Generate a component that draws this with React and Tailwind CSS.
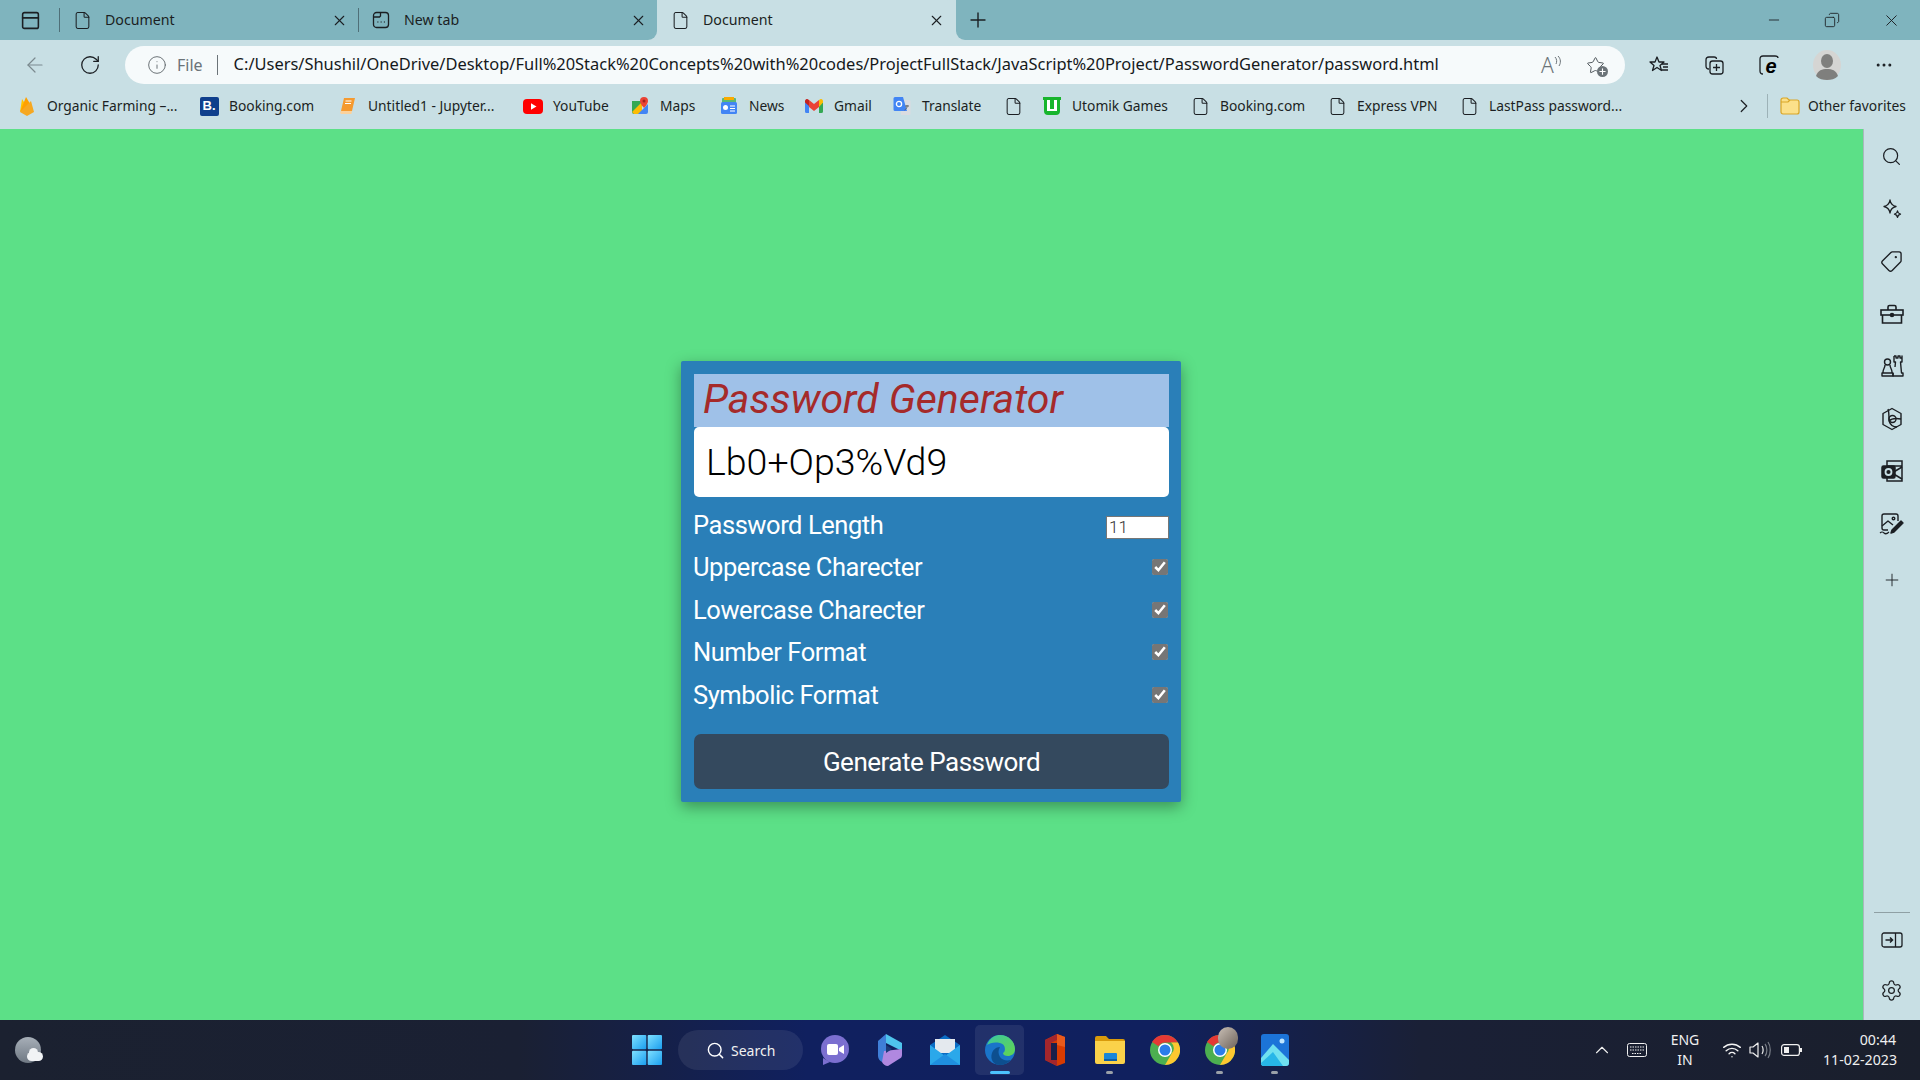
import { ArrowLeft, ChevronRight, ChevronUp, Copy, File, Info, Minus, MoreHorizontal, PanelTop, Plus, RotateCw, Search, Settings, Star, Tag, Wifi, X } from "lucide-react";

const ink = "#1b1f23";

function PageIcon() {
  return <File size={19} strokeWidth={1.3} color={ink} className="shrink-0" />;
}

function Flame() {
  return (
    <svg width="18" height="22" viewBox="0 0 18 22" className="shrink-0">
      <path d="M2 17 4 4l4 6z" fill="#ffc400" />
      <path d="M2 17 8 2l3 5 1 4z" fill="#ffa000" />
      <path d="M2 17 13 6l3 11-7 4z" fill="#f6a821" />
    </svg>
  );
}

function BookingIcon() {
  return (
    <span className="w-[19px] h-[19px] shrink-0 rounded-[2px] bg-[#0f3f8c] text-white text-[13px] font-bold flex items-center justify-center font-['Liberation_Sans',sans-serif]">
      B.
    </span>
  );
}

function BookIcon() {
  return (
    <svg width="18" height="18" viewBox="0 0 18 18" className="shrink-0">
      <path d="M5 1h11l-3 13H2z" fill="#f59a2f" />
      <path d="M2 14h11l-.6 3H2.500A1.600 1.600 0 0 1 2 14z" fill="#fbd29c" />
      <path d="M6.500 4h6M6 6.500h6" stroke="#fff" strokeWidth="1" />
    </svg>
  );
}

function YoutubeIcon() {
  return (
    <svg width="20" height="15" viewBox="0 0 20 15" className="shrink-0">
      <rect width="20" height="15" rx="4" fill="#f00" />
      <path d="M8 4.200v6.600l5.500-3.300z" fill="#fff" />
    </svg>
  );
}

function MapsIcon() {
  return (
    <svg width="18" height="18" viewBox="0 0 18 18" className="shrink-0">
      <path d="M1 4h10v13H3a2 2 0 0 1-2-2z" fill="#34a853" />
      <path d="M1 15 11 5v12H3z" fill="#fbbc04" />
      <path d="M7 17 17 7v8a2 2 0 0 1-2 2z" fill="#4285f4" />
      <path d="M13 0a4 4 0 0 1 4 4c0 3-4 7-4 7s-4-4-4-7a4 4 0 0 1 4-4z" fill="#ea4335" />
      <circle cx="13" cy="4" r="1.500" fill="#a3231a" />
    </svg>
  );
}

function NewsIcon() {
  return (
    <svg width="18" height="18" viewBox="0 0 18 18" className="shrink-0">
      <rect x="2" y="1" width="14" height="6" rx="1" fill="#5bb974" />
      <rect x="4" y="0" width="10" height="3" fill="#f9ab00" />
      <rect x="1" y="5" width="16" height="12" rx="1.500" fill="#4285f4" />
      <rect x="3" y="8" width="5" height="5" rx="2.500" fill="#fff" />
      <path d="M10 9h5M10 11.500h5M10 14h5" stroke="#fff" strokeWidth="1.200" />
    </svg>
  );
}

function GmailIcon() {
  return (
    <svg width="18" height="14" viewBox="0 0 18 14" className="shrink-0">
      <path d="M0 3v9.500A1.500 1.500 0 0 0 1.500 14H4V6z" fill="#4285f4" />
      <path d="M14 6v8h2.500a1.500 1.500 0 0 0 1.500-1.500V3z" fill="#34a853" />
      <path d="M4 7 0 3.500V2a2 2 0 0 1 3.200-1.600L4 1z" fill="#c5221f" />
      <path d="M4 8V1l5 4 5-4v7L9 12z" fill="#ea4335" />
      <path d="M14 8V1l.8-.6A2 2 0 0 1 18 2v1.500z" fill="#fbbc04" />
    </svg>
  );
}

function TranslateIcon() {
  return (
    <svg width="18" height="18" viewBox="0 0 18 18" className="shrink-0">
      <path d="M8 3h8a1.500 1.500 0 0 1 1.500 1.500v12A1.500 1.500 0 0 1 16 18H8z" fill="#dadce0" />
      <path d="M2 0h8l4 14H2a1.500 1.500 0 0 1-1.500-1.500v-11A1.500 1.500 0 0 1 2 0z" fill="#4285f4" />
      <circle cx="6" cy="7" r="2.600" fill="none" stroke="#fff" strokeWidth="1.300" />
      <path d="M12 9h4M14 8v1.500c0 2-1.500 3-2.500 3.500" stroke="#5f6368" strokeWidth="1" fill="none" />
    </svg>
  );
}

function UtomikIcon() {
  return (
    <svg width="20" height="20" viewBox="0 0 20 20" className="shrink-0">
      <path d="M1 4V1h18v3h-1v11a4 4 0 0 1-4 4H6a4 4 0 0 1-4-4V4z" fill="#18b52d" />
      <path d="M5 4h3v9h4V4h3v11H5z" fill="#fff" />
      <rect x="8.500" y="1" width="3" height="12" fill="#18b52d" />
    </svg>
  );
}

const bookmarks = [
  { icon: <Flame />, label: "Organic Farming –...", w: "w-[182px]" },
  { icon: <BookingIcon />, label: "Booking.com", w: "w-[139px]" },
  { icon: <BookIcon />, label: "Untitled1 - Jupyter...", w: "w-[185px]" },
  { icon: <YoutubeIcon />, label: "YouTube", w: "w-[107px]" },
  { icon: <MapsIcon />, label: "Maps", w: "w-[89px]" },
  { icon: <NewsIcon />, label: "News", w: "w-[85px]" },
  { icon: <GmailIcon />, label: "Gmail", w: "w-[88px]" },
  { icon: <TranslateIcon />, label: "Translate", w: "w-[111px]" },
  { icon: <PageIcon />, label: "", w: "w-[39px]" },
  { icon: <UtomikIcon />, label: "Utomik Games", w: "w-[148px]" },
  { icon: <PageIcon />, label: "Booking.com", w: "w-[137px]" },
  { icon: <PageIcon />, label: "Express VPN", w: "w-[132px]" },
  { icon: <PageIcon />, label: "LastPass password...", w: "w-[270px]" },
];

function NewTabIcon() {
  return (
    <svg width="18" height="18" viewBox="0 0 18 18" fill="none" stroke={ink} strokeWidth="1.300" className="shrink-0">
      <rect x="1.500" y="1.500" width="15" height="15" rx="3" />
      <path d="M1.500 6h6l1-1V1.500" />
      <path d="M5.500 11h.8M8.700 11h.8M11.900 11h.8" strokeWidth="1.600" />
    </svg>
  );
}

function Tab({ icon, title, className }) {
  return (
    <div className={`h-10 flex items-center shrink-0 ${className}`}>
      {icon}
      <span className="flex-1 -mt-[1px] text-[14.200px] text-[#1b1f23]">{title}</span>
      <X size={17} strokeWidth={1.5} color={ink} />
    </div>
  );
}

function TabBar() {
  return (
    <div className="h-10 flex bg-[#c8dfe4] shrink-0">
      <div className="w-[657px] flex items-center bg-[#7fb4be] rounded-br-[9px]">
        <div className="w-[59px] h-10 flex items-center justify-center pl-[1px] shrink-0">
          <PanelTop size={21} strokeWidth={1.8} color={ink} />
        </div>
        <div className="w-px h-[24px] bg-[#4f6f78] shrink-0" />
        <Tab icon={<PageIcon />} title="Document" className="w-[298px] pl-[13px] pr-[10px] gap-[13px]" />
        <div className="w-px h-[24px] bg-[#4f6f78] shrink-0" />
        <Tab icon={<NewTabIcon />} title="New tab" className="w-[298px] pl-[13px] pr-[10px] gap-[14px]" />
      </div>
      <Tab icon={<PageIcon />} title="Document" className="w-[299px] pl-[14px] pr-[11px] gap-[13px] bg-[#c8dfe4] rounded-t-[9px]" />
      <div className="flex-1 flex items-center bg-[#7fb4be] rounded-bl-[9px]">
        <div className="w-[44px] flex justify-center">
          <Plus size={24} strokeWidth={1.4} color={ink} />
        </div>
        <div className="ml-auto flex items-center pr-[19px] gap-[42px]">
          <Minus size={16} strokeWidth={1.3} color={ink} />
          <Copy size={16} strokeWidth={1.3} color={ink} className="-scale-x-100" />
          <X size={19} strokeWidth={1.2} color={ink} />
        </div>
      </div>
    </div>
  );
}

function ReadAloud() {
  return (
    <span className="w-[24px] flex items-center text-[#6b7378]">
      <span className="text-[21px] font-light leading-none">A</span>
      <svg width="9" height="14" viewBox="0 0 9 14" fill="none" stroke="#6b7378" strokeWidth="1" className="-mt-[6px]">
        <path d="M1 2c2 2 2 5 1 7M4 1c3 3 3 7 1 10" />
      </svg>
    </span>
  );
}

function FavAdd() {
  return (
    <span className="relative w-[22px] h-[22px] flex items-center justify-center">
      <Star size={19} strokeWidth={1.2} color="#4b5257" />
      <span className="absolute right-[-2px] bottom-[-1px] w-[11px] h-[11px] rounded-full bg-[#6b7378] text-white flex items-center justify-center">
        <Plus size={9} strokeWidth={3} />
      </span>
    </span>
  );
}

function FavList() {
  return (
    <svg width="22" height="22" viewBox="0 0 22 22" fill="none" stroke={ink} strokeWidth="1.300">
      <path d="M9 3l2 5h5l-4 3.500 1.500 5L9 13.500 4.500 16.500 6 11.500 2 8h5z" strokeLinejoin="round" />
      <path d="M14 10h6M15 13h5M14 16h6" />
    </svg>
  );
}

function Collections() {
  return (
    <svg width="22" height="22" viewBox="0 0 22 22" fill="none" stroke={ink} strokeWidth="1.300">
      <path d="M6 15c-2 0-3-1-3-3V6c0-2 1-3 3-3h5c1.500 0 2.500 1 2.500 2" />
      <rect x="7" y="7" width="13" height="13" rx="2.500" />
      <path d="M13.500 10v7M10 13.500h7" />
    </svg>
  );
}

function EdgeE() {
  return (
    <span className="relative w-[22px] h-[22px] flex items-center justify-center">
      <svg width="22" height="22" viewBox="0 0 22 22" fill="none" stroke={ink} strokeWidth="1.300" className="absolute inset-0">
        <path d="M5 20c-2 0-3-1-3-3V5c0-2 1-3 3-3h12c2 0 3 1 3 2" />
      </svg>
      <span className="relative text-[20px] font-bold italic leading-none text-black font-['Liberation_Sans',sans-serif] mt-[1px] ml-[4px]">e</span>
    </span>
  );
}

function Avatar() {
  return (
    <svg width="28" height="30" viewBox="0 0 28 30">
      <ellipse cx="14" cy="15" rx="14" ry="15" fill="#d5d5d3" />
      <ellipse cx="14" cy="11" rx="6" ry="7" fill="#7f7f7d" />
      <path d="M3 26c2-6 6-7 11-7s9 1 11 7c-3 3-7 4-11 4s-8-1-11-4z" fill="#7f7f7d" />
    </svg>
  );
}

function Toolbar() {
  return (
    <div className="h-[45px] flex items-center shrink-0 bg-[#c8dfe4] pt-[5px]">
      <div className="w-[68px] flex justify-center pl-[1px]">
        <ArrowLeft size={24} strokeWidth={1.2} color="#7b8a8f" />
      </div>
      <div className="w-[44px] flex justify-center">
        <RotateCw size={22} strokeWidth={1.4} color={ink} />
      </div>
      <div className="w-[1500px] ml-[13px] h-[38px] rounded-full bg-[#f6fafb] flex items-center shrink-0">
        <Info size={20} strokeWidth={1.1} color="#5f676b" className="ml-[22px]" />
        <span className="ml-[10px] -mt-[1px] text-[16px] text-[#6b7378]">File</span>
        <span className="ml-[14px] w-px h-[20px] bg-[#6b7378]" />
        <span className="ml-[16px] w-[1288px] -mt-[1px] text-[16.450px] text-[#15191c] whitespace-nowrap">
          C:/Users/Shushil/OneDrive/Desktop/Full%20Stack%20Concepts%20with%20codes/ProjectFullStack/JavaScript%20Project/PasswordGenerator/password.html
        </span>
        <div className="ml-auto flex items-center gap-[19px] pr-[19px]">
          <ReadAloud />
          <FavAdd />
        </div>
      </div>
      <div className="flex-1 flex items-center justify-between pl-[23px] pr-[26px]">
        <FavList />
        <Collections />
        <EdgeE />
        <Avatar />
        <MoreHorizontal size={20} strokeWidth={1.6} color={ink} />
      </div>
    </div>
  );
}

function BookmarksBar() {
  return (
    <div className="h-[44px] flex items-center shrink-0 bg-[#c8dfe4] pl-[18px] pb-[2px]">
      {bookmarks.map((b, i) => (
        <div key={i} className={`${b.w} shrink-0 flex items-center gap-[11px]`}>
          <span className="w-[18px] flex justify-center">{b.icon}</span>
          {b.label && <span className="text-[13.800px] text-[#1b1f23] whitespace-nowrap">{b.label}</span>}
        </div>
      ))}
      <div className="w-[28px] flex justify-center">
        <ChevronRight size={22} strokeWidth={1.3} color={ink} />
      </div>
      <div className="w-px h-[24px] bg-[#9db2b7] ml-[9px]" />
      <div className="ml-[12px] flex items-center gap-[8px]">
        <svg width="20" height="18" viewBox="0 0 20 18" className="shrink-0">
          <path d="M1 3a2 2 0 0 1 2-2h4l2 2h8a2 2 0 0 1 2 2v10a2 2 0 0 1-2 2H3a2 2 0 0 1-2-2z" fill="#fbe08a" stroke="#d9a526" strokeWidth="1.200" />
          <path d="M1 5h7l2-2" fill="none" stroke="#d9a526" strokeWidth="1.200" />
        </svg>
        <span className="text-[13.800px] text-[#1b1f23] whitespace-nowrap">Other favorites</span>
      </div>
    </div>
  );
}

function OptionRow({ label }) {
  return (
    <div className="h-[42.500px] flex items-center justify-between text-white text-[25.500px] tracking-[-0.450px]">
      <span className="-ml-[1px]">{label}</span>
      <input type="checkbox" defaultChecked className="w-4 h-4 mr-[1px] accent-[#767676]" />
    </div>
  );
}

function PasswordCard() {
  return (
    <div className="w-[500px] pl-[13px] pr-[12px] pt-[13px] pb-[13px] bg-[#2a7fb8] rounded-[2px] shadow-[0_5px_15px_rgba(0,0,0,0.35)] font-['Roboto',sans-serif]">
      <h1 className="h-[53px] pl-[9px] pb-[2px] flex items-center bg-[#9fc1e8] text-[#a52a2a] text-[41px] italic font-normal leading-none">
        Password Generator
      </h1>
      <div className="h-[70px] pl-[12px] pt-[1px] flex items-center bg-white rounded-[5px] text-black text-[37.500px] font-light">
        Lb0+Op3%Vd9
      </div>
      <div className="h-[40px] mt-[9px] flex items-center justify-between text-white text-[25.500px] tracking-[-0.450px]">
        <span className="-mt-[2px] -ml-[1px]">Password Length</span>
        <input
          type="number"
          defaultValue={11}
          readOnly
          className="w-[63px] h-[23px] mt-[3px] px-[2px] bg-white border border-[#767676] text-[17px] font-light tracking-normal text-[#333]"
        />
      </div>
      <OptionRow label="Uppercase Charecter" />
      <OptionRow label="Lowercase Charecter" />
      <OptionRow label="Number Format" />
      <OptionRow label="Symbolic Format" />
      <button className="w-full h-[55px] mt-[18px] pt-[2px] bg-[#34495e] rounded-[7px] text-white text-[26px] font-normal tracking-[-0.500px]">
        Generate Password
      </button>
    </div>
  );
}

function SideSlot({ children }) {
  return <div className="h-[52.500px] flex items-center justify-center shrink-0">{children}</div>;
}

function Sparkle() {
  return (
    <svg width="22" height="22" viewBox="0 0 22 22" fill="none" stroke={ink} strokeWidth="1.300" strokeLinejoin="round">
      <path d="M9 2c.6 4 2 5.500 6 6.500-4 1-5.400 2.500-6 6.500-.6-4-2-5.500-6-6.500 4-1 5.400-2.500 6-6.500z" />
      <path d="M16.500 13c.3 2 1 2.700 3 3.200-2 .5-2.700 1.200-3 3.200-.3-2-1-2.700-3-3.200 2-.5 2.700-1.200 3-3.200z" />
    </svg>
  );
}

function Toolbox() {
  return (
    <svg width="24" height="22" viewBox="0 0 24 22" fill="none" stroke={ink} strokeWidth="1.600">
      <path d="M8 7V4a1.500 1.500 0 0 1 1.500-1.500h5A1.500 1.500 0 0 1 16 4v3" />
      <rect x="1" y="7" width="22" height="5" />
      <path d="M2.500 12v8h19v-8" />
      <circle cx="12" cy="12" r="1.500" fill={ink} />
    </svg>
  );
}

function Chess() {
  return (
    <svg width="24" height="24" viewBox="0 0 24 24" fill="none" stroke={ink} strokeWidth="1.400" strokeLinejoin="round">
      <path d="M14 2h2v2h2V2h2v2h2V2v6h-1.500l1 11H23v3H13v-3" />
      <path d="M14 2v6h1.500l-.5 5" />
      <circle cx="7.500" cy="8" r="3" />
      <path d="M5 11c0 3-2 4-2 7v1h9v-1c0-3-2-4-2-7M2 19h11v3H2z" />
    </svg>
  );
}

function HexLogo() {
  return (
    <svg width="22" height="24" viewBox="0 0 22 24" fill="none" stroke={ink} strokeWidth="1.400" strokeLinejoin="round">
      <path d="M11 1.500 20 6.500v11L11 22.500 2 17.500v-11z" />
      <path d="M7 2c1 2 1 7 1 12 3-3 7-3 12-2M8 14c1 3 4 6 8 6" />
      <circle cx="11.500" cy="12" r="3.500" />
    </svg>
  );
}

function OutlookIcon() {
  return (
    <svg width="24" height="24" viewBox="0 0 24 24" fill="none" stroke={ink} strokeWidth="1.500">
      <rect x="7" y="2" width="15" height="20" />
      <path d="M7 7h15M12 14l10 6M12 14l10-6" />
      <rect x="2" y="7" width="13" height="12" rx="1.500" fill={ink} />
      <circle cx="8.500" cy="13" r="3" stroke="#c8dfe4" strokeWidth="1.800" />
    </svg>
  );
}

function ImageEdit() {
  return (
    <svg width="25" height="24" viewBox="0 0 25 24" fill="none" stroke={ink} strokeWidth="1.400" strokeLinejoin="round">
      <path d="M9 18H5a2 2 0 0 1-2-2V4a2 2 0 0 1 2-2h12a2 2 0 0 1 2 2v5" />
      <path d="M3 14l6-5 5 4" />
      <circle cx="14.500" cy="6.500" r="1.300" />
      <path d="M13 18l9-9 2 2-9 9-3 1z" fill={ink} />
      <path d="M1 21c2-2 3-1 4 0s3 1 5-1" strokeWidth="1.100" />
    </svg>
  );
}

function CollapseIcon() {
  return (
    <svg width="22" height="18" viewBox="0 0 22 18" fill="none" stroke={ink} strokeWidth="1.300">
      <rect x="1" y="2" width="20" height="14" rx="2" />
      <path d="M14.500 2v14" />
      <path d="M4.500 9h7M9 6.500 11.500 9 9 11.500" strokeWidth="1.500" />
    </svg>
  );
}

function SidePanel() {
  return (
    <div className="w-[57px] shrink-0 bg-[#c8dfe4] border-l border-[#a9b8bb] flex flex-col items-center pt-[1px] pb-[3px] pr-[1px]">
      <SideSlot><Search size={21} strokeWidth={1.4} color={ink} /></SideSlot>
      <SideSlot><Sparkle /></SideSlot>
      <SideSlot><Tag size={23} strokeWidth={1.4} color={ink} className="-scale-x-100" /></SideSlot>
      <SideSlot><Toolbox /></SideSlot>
      <SideSlot><Chess /></SideSlot>
      <SideSlot><HexLogo /></SideSlot>
      <SideSlot><OutlookIcon /></SideSlot>
      <SideSlot><ImageEdit /></SideSlot>
      <div className="mt-[4px]"><SideSlot><Plus size={20} strokeWidth={1.1} color={ink} /></SideSlot></div>
      <div className="mt-auto w-[36px] h-px bg-[#8fa0a4]" />
      <div className="mt-[18px]"><CollapseIcon /></div>
      <div className="mt-[30px] mb-[15px]"><Settings size={23} strokeWidth={1.3} color={ink} /></div>
    </div>
  );
}

function WinLogo() {
  return (
    <svg width="30" height="30" viewBox="0 0 30 30">
      <defs>
        <linearGradient id="winA" x1="0" y1="0" x2="1" y2="1">
          <stop offset="0" stopColor="#7fe0ff" />
          <stop offset="1" stopColor="#1a9eef" />
        </linearGradient>
      </defs>
      <rect x="0" y="0" width="14.300" height="14.300" rx="1" fill="url(#winA)" />
      <rect x="15.700" y="0" width="14.300" height="14.300" rx="1" fill="url(#winA)" />
      <rect x="0" y="15.700" width="14.300" height="14.300" rx="1" fill="url(#winA)" />
      <rect x="15.700" y="15.700" width="14.300" height="14.300" rx="1" fill="url(#winA)" />
    </svg>
  );
}

function TeamsIcon() {
  return (
    <svg width="30" height="32" viewBox="0 0 30 32">
      <circle cx="15" cy="15" r="14" fill="#7b6fd0" />
      <path d="M3 24v7l7-3z" fill="#7b6fd0" />
      <rect x="7" y="10" width="11" height="11" rx="2" fill="#fff" />
      <path d="M19 14l5-3v9l-5-3z" fill="#fff" />
    </svg>
  );
}

function CopilotIcon() {
  return (
    <svg width="28" height="34" viewBox="0 0 28 34">
      <path d="M2 8 10 1v26l-4 2c-2-1-4-3-4-6z" fill="#3f7fd8" />
      <path d="M10 1l16 9v8L10 10z" fill="#4fc4ec" />
      <path d="M8 18l18-2v6c0 2-1 3-3 4L12 33c-3 0-5-2-6-4z" fill="#b088e0" />
      <path d="M10 12l6 4-6 4z" fill="#1b3a78" />
    </svg>
  );
}

function MailIcon() {
  return (
    <svg width="30" height="30" viewBox="0 0 30 30">
      <path d="M15 0 30 10v20H0V10z" fill="#0a6cc4" />
      <path d="M5 4h20v14H5z" fill="#e4e9ee" />
      <path d="M0 10l15 11 15-11v20H0z" fill="#2ba8ea" />
      <path d="M0 30l15-11 15 11z" fill="#1f8fe0" />
    </svg>
  );
}

function EdgeIcon() {
  return (
    <svg width="30" height="32" viewBox="0 0 30 32">
      <defs>
        <linearGradient id="edgeG" x1="0" y1="0" x2="1" y2="1">
          <stop offset="0" stopColor="#3bc7a0" />
          <stop offset="1" stopColor="#62d54f" />
        </linearGradient>
      </defs>
      <circle cx="15" cy="16" r="15" fill="#1a74c9" />
      <path d="M2 11C5 3 11 1 15 1c9 0 15 7 15 14 0 5-4 7-7 7-3 0-5-1-5-3 3-1 3-9-3-10-6-1-10 0-13 2z" fill="url(#edgeG)" />
      <path d="M15 31c-7 0-10-6-8-12 1-3 4-6 8-6-2 3-2 7 0 10 2 3 6 4 11 3-3 3-7 5-11 5z" fill="#0d4f8f" />
    </svg>
  );
}

function OfficeIcon() {
  return (
    <svg width="24" height="32" viewBox="0 0 24 32">
      <path d="M2 6 14 0l8 3v26l-8 3-12-6z" fill="#d83b01" />
      <path d="M14 0l8 3v10l-8-2z" fill="#e85a1c" />
      <path d="M2 6l12-6v6L8 9v14l6 3v6L2 26z" fill="#a4262c" />
      <rect x="8" y="9" width="6" height="17" fill="#1a1f4a" />
    </svg>
  );
}

function FilesIcon() {
  return (
    <svg width="30" height="28" viewBox="0 0 30 28">
      <path d="M0 2a2 2 0 0 1 2-2h9l3 3h14a2 2 0 0 1 2 2v4H0z" fill="#d99a0b" />
      <path d="M0 5h30v21a2 2 0 0 1-2 2H2a2 2 0 0 1-2-2z" fill="#fbd24a" />
      <rect x="9" y="17" width="13" height="8" rx="1" fill="#1a87d8" />
      <rect x="9" y="23" width="13" height="2" fill="#0d5fa8" />
    </svg>
  );
}

function ChromeIcon() {
  return (
    <svg width="30" height="30" viewBox="0 0 30 30">
      <circle cx="15" cy="15" r="15" fill="#4caf50" />
      <path d="M15 0a15 15 0 0 1 13 7.500H15a7.500 7.500 0 0 0-6.500 3.800L2 7A15 15 0 0 1 15 0z" fill="#e53935" />
      <path d="M28 7.500A15 15 0 0 1 15 30l6.500-11.200A7.500 7.500 0 0 0 21 7.500z" fill="#fdc830" />
      <circle cx="15" cy="15" r="7" fill="#fff" />
      <circle cx="15" cy="15" r="5.500" fill="#2b7de9" />
    </svg>
  );
}

function PhotosIcon() {
  return (
    <svg width="28" height="32" viewBox="0 0 28 32">
      <rect width="28" height="32" rx="3" fill="#1c74d8" />
      <circle cx="21" cy="7" r="2.500" fill="#bfe6ff" />
      <path d="M0 24 12 10l16 16v3a3 3 0 0 1-3 3H3a3 3 0 0 1-3-3z" fill="#6fe0f0" />
      <path d="M0 29l12-11 10 14H3a3 3 0 0 1-3-3z" fill="#27b6e8" />
    </svg>
  );
}

function TaskSlot({ children, mark, active }) {
  return (
    <div className="relative w-[55px] h-[50px] flex items-center justify-center shrink-0">
      {active && <div className="absolute inset-y-0 left-[3px] w-[49px] rounded-[5px] bg-[#ffffff14]" />}
      <div className="relative">{children}</div>
      {mark && (
        <div className={active ? "absolute bottom-[1px] left-[18px] w-[20px] h-[3px] rounded-full bg-[#4cc2ff]" : "absolute bottom-[1px] left-[24px] w-[7px] h-[3px] rounded-full bg-[#9aa0a8]"} />
      )}
    </div>
  );
}

function Taskbar() {
  return (
    <div className="h-[60px] shrink-0 flex items-center text-white bg-[linear-gradient(90deg,#1b2130_0%,#1a2033_27%,#10205f_42%,#10205e_60%,#1a2036_74%,#1a1f2c_100%)]">
      <div className="w-[632px] pl-[15px] shrink-0">
        <div className="relative w-[28px] h-[26px]">
          <div className="w-[26px] h-[26px] rounded-full bg-[linear-gradient(180deg,#a7afb8,#6f7883)]" />
          <div className="absolute right-0 bottom-[2px] w-[16px] h-[9px] rounded-full bg-[#f1f3f5]" />
          <div className="absolute right-[5px] bottom-[6px] w-[9px] h-[9px] rounded-full bg-[#f1f3f5]" />
        </div>
      </div>
      <WinLogo />
      <div className="ml-[16px] w-[125px] h-[40px] rounded-full bg-[#ffffff14] flex items-center pl-[28px] gap-[6px] shrink-0">
        <Search size={19} strokeWidth={1.8} color="#fff" />
        <span className="text-[14px] text-[#f1f1f1]">Search</span>
      </div>
      <div className="ml-[4px] flex items-center">
        <TaskSlot><TeamsIcon /></TaskSlot>
        <TaskSlot><CopilotIcon /></TaskSlot>
        <TaskSlot><MailIcon /></TaskSlot>
        <TaskSlot mark active><EdgeIcon /></TaskSlot>
        <TaskSlot><OfficeIcon /></TaskSlot>
        <TaskSlot mark><FilesIcon /></TaskSlot>
        <TaskSlot><ChromeIcon /></TaskSlot>
        <TaskSlot mark>
          <ChromeIcon />
          <span className="absolute -top-[8px] -right-[3px] w-[20px] h-[22px] rounded-full bg-[linear-gradient(135deg,#c9bfb5,#6d625a)]" />
        </TaskSlot>
        <TaskSlot mark><PhotosIcon /></TaskSlot>
      </div>
      <div className="ml-auto flex items-center pr-[24px]">
        <ChevronUp size={22} strokeWidth={1.2} color="#f0f0f0" />
        <svg width="20" height="14" viewBox="0 0 20 14" fill="none" stroke="#f0f0f0" strokeWidth="1" className="ml-[14px]">
          <rect x="0.500" y="0.500" width="19" height="13" rx="2" />
          <path d="M3 4h14M3 7h14M5 10.500h10" strokeDasharray="1.500 1" />
        </svg>
        <div className="w-[48px] ml-[14px] text-center text-[14px] leading-[20px] text-[#f0f0f0]">ENG<br />IN</div>
        <Wifi size={20} strokeWidth={1.7} color="#f4f4f4" className="ml-[13px]" />
        <svg width="22" height="18" viewBox="0 0 22 18" fill="none" stroke="#f0f0f0" strokeWidth="1.200" className="ml-[7px]">
          <path d="M1 6h3l5-4v14l-5-4H1z" strokeLinejoin="round" />
          <path d="M13 5c1.500 2 1.500 6 0 8" />
          <path d="M16 3c2.500 3 2.500 9 0 12M19 1c3 4 3 12 0 16" stroke="#7a7f88" />
        </svg>
        <svg width="21" height="12" viewBox="0 0 21 12" className="ml-[10px]">
          <rect x="0.600" y="0.600" width="17.800" height="10.800" rx="2.500" fill="none" stroke="#f0f0f0" strokeWidth="1.200" />
          <rect x="3" y="3" width="5" height="6" fill="#f0f0f0" />
          <rect x="19" y="4" width="2" height="4" fill="#f0f0f0" />
        </svg>
        <div className="w-[73px] ml-[21px] text-right text-[14.200px] leading-[20px] text-[#f0f0f0] whitespace-nowrap">
          00:44<br />11-02-2023
        </div>
      </div>
    </div>
  );
}

export default function App() {
  return (
    <div className="w-[1920px] h-[1080px] overflow-hidden flex flex-col bg-[#5ce087] font-['Noto_Sans',sans-serif]">
      <TabBar />
      <Toolbar />
      <BookmarksBar />
      <div className="flex-1 min-h-0 flex">
        <main className="flex-1 flex justify-center items-start pt-[232px] pr-[1px] bg-[#5ce087]">
          <PasswordCard />
        </main>
        <SidePanel />
      </div>
      <Taskbar />
    </div>
  );
}
